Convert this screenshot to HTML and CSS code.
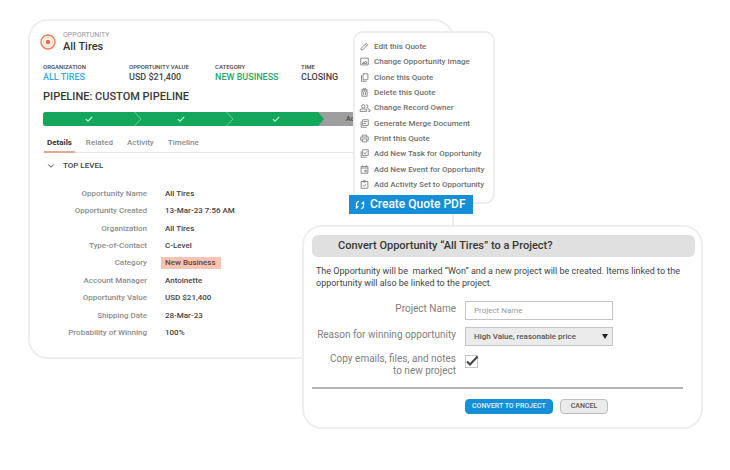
FILE: index.html
```html
<!DOCTYPE html>
<html lang="en">
<head>
<meta charset="utf-8">
<meta name="viewport" content="width=device-width, initial-scale=1">
<title>All Tires – Opportunity</title>
<link rel="stylesheet" href="styles.css">
</head>
<body>
<main class="stage">
  <section class="card record">
    <header class="record-head">
      <svg class="target" viewBox="0 0 16 16" aria-hidden="true"><circle cx="8" cy="8" r="7" fill="#fff6f0" stroke="#ee805f" stroke-width="1.5"/><circle cx="8" cy="8" r="4.6" fill="none" stroke="#fbd9b0" stroke-width="1"/><circle cx="8" cy="8" r="2.3" fill="#ea6c50"/></svg>
      <div>
        <p class="kind">OPPORTUNITY</p>
        <h1>All Tires</h1>
      </div>
    </header>
    <dl class="facts">
      <div><dt>ORGANIZATION</dt><dd class="blue">ALL TIRES</dd></div>
      <div><dt>OPPORTUNITY VALUE</dt><dd>USD $21,400</dd></div>
      <div><dt>CATEGORY</dt><dd class="green">NEW BUSINESS</dd></div>
      <div><dt>TIME</dt><dd>CLOSING</dd></div>
    </dl>
    <h2>PIPELINE: CUSTOM PIPELINE</h2>
    <ol class="pipeline">
      <li><svg class="tick" viewBox="0 0 8 6"><path d="M.8 3.1 3 5.2 7.2.8"/></svg><svg class="chevron" viewBox="0 0 8 14"><path d="M.5 0 7 7 .5 14"/></svg></li>
      <li><svg class="tick" viewBox="0 0 8 6"><path d="M.8 3.1 3 5.2 7.2.8"/></svg><svg class="chevron" viewBox="0 0 8 14"><path d="M.5 0 7 7 .5 14"/></svg></li>
      <li class="last"><svg class="tick" viewBox="0 0 8 6"><path d="M.8 3.1 3 5.2 7.2.8"/></svg></li>
      <li class="pending">Ac</li>
    </ol>
    <nav class="tabs">
      <a href="#details" class="active">Details</a>
      <a href="#related">Related</a>
      <a href="#activity">Activity</a>
      <a href="#timeline">Timeline</a>
    </nav>
    <h3><svg viewBox="0 0 8 6" aria-hidden="true"><path d="M1.2 1.4 4 4.3 6.8 1.4"/></svg>TOP LEVEL</h3>
    <dl class="details" id="details">
      <dt>Opportunity Name</dt><dd>All Tires</dd>
      <dt>Opportunity Created</dt><dd>13-Mar-23 7:56 AM</dd>
      <dt>Organization</dt><dd>All Tires</dd>
      <dt>Type-of-Contact</dt><dd>C-Level</dd>
      <dt>Category</dt><dd><mark>New Business</mark></dd>
      <dt>Account Manager</dt><dd>Antoinette</dd>
      <dt>Opportunity Value</dt><dd>USD $21,400</dd>
      <dt>Shipping Date</dt><dd>28-Mar-23</dd>
      <dt>Probability of Winning</dt><dd>100%</dd>
    </dl>
  </section>

  <div class="actions">
    <ul class="menu">
      <li><button type="button"><svg viewBox="0 0 24 24"><path d="M3 21v-4L16.500 3.500l4 4L7 21zM14 6l4 4"/></svg>Edit this Quote</button></li>
      <li><button type="button"><svg viewBox="0 0 24 24"><path d="M2 3h20v18H2zM6 17h12M7 17l3-4 2 2 3-4 4 6"/></svg>Change Opportunity Image</button></li>
      <li><button type="button"><svg viewBox="0 0 24 24"><path d="M8 2h13v16H8zM4 6v16h13"/></svg>Clone this Quote</button></li>
      <li><button type="button"><svg viewBox="0 0 24 24"><path d="M3 5h18M8 5V2h8v3M5 8h14v14H5zM9.500 11v8M14.500 11v8"/></svg>Delete this Quote</button></li>
      <li><button type="button"><svg class="wide" viewBox="0 0 28 24"><circle cx="10" cy="8" r="4"/><path d="M2 20v-3q0-3 8-3t8 3v3zM17 4a4 4 0 0 1 0 8M20 14q6 1 6 3v3h-4"/></svg>Change Record Owner</button></li>
      <li><button type="button"><svg viewBox="0 0 24 24"><path d="M7 2h15v15H7zM3 6v16h15M10 7h9M10 12h6"/></svg>Generate Merge Document</button></li>
      <li><button type="button"><svg viewBox="0 0 24 24"><path d="M6 8V3h12v5M6 17H2V8h20v9h-4M6 13h12v8H6z"/></svg>Print this Quote</button></li>
      <li><button type="button"><svg viewBox="0 0 24 24"><path d="M7 2h15v15H7zM3 6v16h15M10 9l3 4 6-7"/></svg>Add New Task for Opportunity</button></li>
      <li><button type="button"><svg viewBox="0 0 24 24"><path d="M3 4h18v18H3zM3 8h18M7 1v4M17 1v4M13 14h4v4h-4z"/></svg>Add New Event for Opportunity</button></li>
      <li><button type="button"><svg viewBox="0 0 24 24"><path d="M3 4h18v18H3zM9 2h6v3H9zM7 13l4 4 6-7"/></svg>Add Activity Set to Opportunity</button></li>
    </ul>
    <button type="button" class="create"><svg viewBox="0 0 12 12" aria-hidden="true"><path d="M4.800 1.500Q1.800 2 1.800 5v4M7.200 10.500Q10.200 10 10.200 7V3"/><path class="head" d="M1 11.200V7.400H5zM11 .8V4.600H7z"/></svg>Create Quote PDF</button>
  </div>

  <form class="card dialog">
    <h2 class="dialog-title">Convert Opportunity “All Tires” to a Project?</h2>
    <p class="message">The Opportunity will be&nbsp; marked “Won” and a new project will be created. Items linked to the opportunity will also be linked to the project.</p>
    <div class="fields">
      <label for="name">Project Name</label>
      <input type="text" id="name" placeholder="Project Name">
      <label for="reason">Reason for winning opportunity</label>
      <span class="select"><select id="reason"><option>High Value, reasonable price</option></select><svg viewBox="0 0 6 5" aria-hidden="true"><path d="M0 0h6L3 5z"/></svg></span>
      <label for="copy" class="copy">Copy emails, files, and notes to&nbsp;new&nbsp;project</label>
      <span class="check"><input type="checkbox" id="copy" checked><svg viewBox="0 0 14 12" aria-hidden="true"><path d="M2 6.500 5 9.500 12.500 1.500"/></svg></span>
    </div>
    <div class="buttons">
      <button type="submit" class="primary">CONVERT TO PROJECT</button>
      <button type="button" class="secondary">CANCEL</button>
    </div>
  </form>
</main>
</body>
</html>
```
FILE: styles.css
```css
* { box-sizing: border-box; margin: 0; padding: 0; }
body { background: #fff; color: #444; font-family: Roboto, "Liberation Sans", sans-serif; font-size: 8px; line-height: 12px; }
button, input, select { font: inherit; color: inherit; }
svg { flex: none; fill: none; }
ul, ol { list-style: none; }

.stage { display: grid; grid-template-columns: 274fr 47fr 105fr 249fr; align-items: start; padding: 19px 27px 0 28px; }
.card { background: #fff; border: 2px solid #eee; border-radius: 20px; }
.record { grid-area: 1 / 1 / 2 / 4; padding: 10px 0 15px 13px; overflow: hidden; }
.actions { grid-area: 1 / 3 / 2 / 5; justify-self: start; margin-top: 12px; z-index: 1; }
.dialog { grid-area: 1 / 2 / 2 / 5; margin-top: 206px; padding: 8px 6px 13px 8px; z-index: 1; }

.record-head { display: flex; align-items: center; gap: 7px; margin-left: -3px; }
.target { width: 16px; height: 16px; }
.kind { font-size: 7px; line-height: 9px; color: #999; }
h1 { font-size: 11px; line-height: 13px; font-weight: 500; color: #333; }
.facts { display: grid; grid-template-columns: repeat(4, 86px); margin-top: 10px; }
.facts dt { font-size: 6px; line-height: 8px; font-weight: 500; }
.facts dd { font-size: 9px; line-height: 12px; font-weight: 500; white-space: nowrap; }
.facts .blue { color: #36a9d6; }
.facts .green { color: #1fa866; }
h2 { font-size: 11px; line-height: 14px; font-weight: 500; color: #383838; }
.record h2 { margin-top: 7px; }

.pipeline { display: flex; height: 14px; margin-top: 8px; border-radius: 3px 0 0 3px; overflow: hidden; background: #9e9e9e; }
.pipeline li { flex: 0 0 92px; display: flex; align-items: center; justify-content: center; background: #12a75b; position: relative; }
.pipeline .last { flex-basis: 97px; clip-path: polygon(0 0, 91px 0, 100% 50%, 91px 100%, 0 100%); }
.pipeline .pending { flex: 1 0 0; justify-content: flex-start; padding-left: 22px; background: none; font-size: 7px; font-weight: 500; }
.tick { width: 8px; height: 6px; stroke: #c9f2da; stroke-width: 1.2; }
.chevron { position: absolute; right: -7px; top: 0; z-index: 1; width: 8px; height: 14px; stroke: #69cf98; stroke-width: 1; }

.tabs { display: flex; border-bottom: 1px solid #e4e4e4; margin-top: 8px; padding-left: 1px; }
.tabs a { color: #8c8c8c; font-weight: 500; text-decoration: none; line-height: 17px; padding: 0 3px; margin: 0 8px -1px 0; border-bottom: 2px solid transparent; }
.tabs .active { color: #333; font-weight: 700; border-bottom-color: #e5a98c; }
h3 { display: flex; align-items: center; gap: 8px; margin: 7px 0 0 4px; font-size: 8px; line-height: 12px; font-weight: 500; }
h3 svg { width: 8px; height: 6px; stroke: #555; }
.details { display: grid; grid-template-columns: 104px 1fr; grid-auto-rows: 1fr; column-gap: 18px; align-items: center; min-height: 157px; margin-top: 13px; font-weight: 500; }
.details dt { text-align: right; color: #8c8c8c; }
mark { display: inline-block; margin-left: -4px; padding: 0 5px 0 4px; background: #f8c3b3; color: #5c4640; }

.menu { display: flex; flex-direction: column; justify-content: space-between; width: 142px; min-height: 173px; margin-left: 4px; padding: 8px 0 12px 5px; background: #fff; border: 2px solid #eee; border-radius: 10px; }
.menu button { display: flex; align-items: center; gap: 5px; border: 0; background: none; color: #707070; font-weight: 500; line-height: 11px; white-space: nowrap; }
.menu svg { width: 9px; height: 9px; stroke: #777; stroke-width: 2.2; }
.menu .wide { width: 12px; height: 10px; margin: 0 -2px 0 -1px; }
.create { display: flex; align-items: center; gap: 5px; position: relative; margin-top: -9px; padding: 0 7px 0 6px; border: 0; background: #148fd8; color: #fff; font-size: 12px; line-height: 19px; font-weight: 500; }
.create svg { width: 10px; height: 10px; stroke: #fff; stroke-width: 1.5; }
.create .head { fill: #fff; stroke: none; }

.dialog-title { padding: 4px 26px; border-radius: 6px; background: #e0e0e0; font-size: 11px; line-height: 14px; }
.message { margin: 8px 8px 0 4px; font-size: 9px; line-height: 12px; }
.fields { display: grid; grid-template-columns: 144px 148px; column-gap: 9px; row-gap: 7px; margin-top: 12px; padding-bottom: 10px; border-bottom: 2px solid #b4b4b4; margin-right: 12px; font-size: 10px; color: #808080; }
.fields label { text-align: right; align-self: center; padding-bottom: 3px; white-space: nowrap; }
.fields .copy { white-space: normal; padding: 0 0 0 10px; }
.fields input[type="text"] { width: 100%; height: 19px; padding: 0 8px; border: 1px solid #c4c4c4; background: #fff; font-size: 8px; }
::placeholder { color: #999; opacity: 1; }
.select { position: relative; display: block; }
.select select { appearance: none; display: block; width: 100%; height: 19px; padding: 0 8px; border: 1px solid #c4c4c4; border-radius: 0; background: #ebebeb; color: #555; font-size: 8px; font-weight: 500; }
.select svg { position: absolute; right: 5px; top: 7px; width: 6px; height: 5px; fill: #222; }
.check { position: relative; display: block; width: 13px; height: 13px; margin-top: 2px; }
.check input { appearance: none; display: block; width: 13px; height: 13px; border: 1px solid #c4c4c4; }
.check svg { position: absolute; left: 0; top: 0; width: 14px; height: 12px; stroke: #444; stroke-width: 2; pointer-events: none; }
.buttons { display: flex; gap: 7px; margin: 10px 0 0 153px; }
.buttons button { height: 15px; border-radius: 4px; font-size: 7px; font-weight: 500; line-height: 13px; }
.primary { padding: 0 6px; border: 1px solid #148fd8; background: #148fd8; color: #e0f3ff; }
.secondary { padding: 0 10px; border: 1px solid #bdbdbd; background: #ebebeb; color: #555; }
```
